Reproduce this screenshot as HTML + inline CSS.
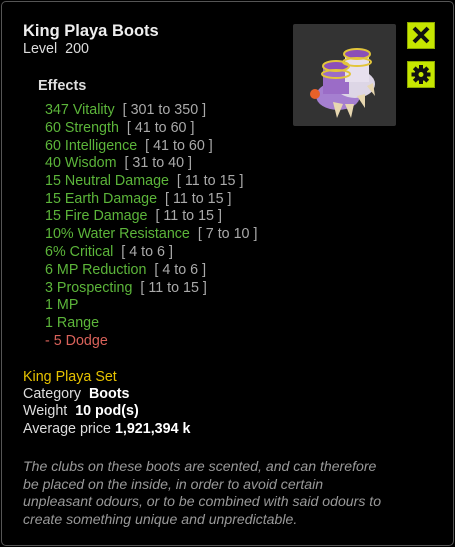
<!DOCTYPE html>
<html><head><style>
body{margin:0;width:455px;height:547px;background:#000;font-family:"Liberation Sans",sans-serif;overflow:hidden}
.box{position:absolute;left:1px;top:1px;width:451px;height:543px;border:1px solid #555;border-radius:5px;background:#000}
.t{position:absolute;white-space:nowrap;font-size:14.3px;line-height:16px}
.g{color:#5cb53a}.r{color:#aaa}
.btn{position:absolute;left:407px;width:28px;height:27px;background:#c6e600;border:1px solid #8da800;box-sizing:border-box}
</style></head><body>
<div class="box"></div>
<div class="t" style="left:23px;top:23px;font-size:16.5px;font-weight:bold;color:#eee">King Playa Boots</div>
<div class="t" style="left:23px;top:41px;color:#ddd">Level&nbsp; 200</div>
<div class="t" style="left:38px;top:78px;font-weight:bold;color:#ddd;font-size:14.5px">Effects</div>
<div class="t g" style="left:45px;top:102px">347 Vitality <span class="r">&nbsp;[ 301 to 350 ]</span></div>
<div class="t g" style="left:45px;top:120px">60 Strength <span class="r">&nbsp;[ 41 to 60 ]</span></div>
<div class="t g" style="left:45px;top:138px">60 Intelligence <span class="r">&nbsp;[ 41 to 60 ]</span></div>
<div class="t g" style="left:45px;top:155px">40 Wisdom <span class="r">&nbsp;[ 31 to 40 ]</span></div>
<div class="t g" style="left:45px;top:173px">15 Neutral Damage <span class="r">&nbsp;[ 11 to 15 ]</span></div>
<div class="t g" style="left:45px;top:191px">15 Earth Damage <span class="r">&nbsp;[ 11 to 15 ]</span></div>
<div class="t g" style="left:45px;top:208px">15 Fire Damage <span class="r">&nbsp;[ 11 to 15 ]</span></div>
<div class="t g" style="left:45px;top:226px">10% Water Resistance <span class="r">&nbsp;[ 7 to 10 ]</span></div>
<div class="t g" style="left:45px;top:244px">6% Critical <span class="r">&nbsp;[ 4 to 6 ]</span></div>
<div class="t g" style="left:45px;top:262px">6 MP Reduction <span class="r">&nbsp;[ 4 to 6 ]</span></div>
<div class="t g" style="left:45px;top:280px">3 Prospecting <span class="r">&nbsp;[ 11 to 15 ]</span></div>
<div class="t g" style="left:45px;top:297px">1 MP</div>
<div class="t g" style="left:45px;top:315px">1 Range</div>
<div class="t" style="left:45px;top:333px;color:#d9625a">- 5 Dodge</div>
<div class="t" style="left:23px;top:369px;color:#e6c200">King Playa Set</div>
<div class="t" style="left:23px;top:386px;color:#ddd">Category&nbsp; <b style="color:#fff">Boots</b></div>
<div class="t" style="left:23px;top:403px;color:#ddd">Weight&nbsp; <b style="color:#fff">10 pod(s)</b></div>
<div class="t" style="left:23px;top:421px;color:#ddd">Average price <b style="color:#fff">1,921,394 k</b></div>
<div class="t" style="left:23px;top:458px;color:#999;font-style:italic;line-height:17.7px;font-size:14.1px">The clubs on these boots are scented, and can therefore<br>be placed on the inside, in order to avoid certain<br>unpleasant odours, or to be combined with said odours to<br>create something unique and unpredictable.</div>
<div style="position:absolute;left:293px;top:24px;width:103px;height:102px;background:#333;border-radius:2px">
<svg width="103" height="102" viewBox="0 0 103 102">
<ellipse cx="45" cy="72" rx="22" ry="14" fill="#a57fd0"/>
<ellipse cx="62" cy="60" rx="20" ry="14" fill="#ddd6e6"/>
<rect x="30" y="40" width="26" height="30" fill="#9b6cc7"/>
<rect x="52" y="28" width="24" height="30" fill="#e7e0ee"/>
<ellipse cx="64" cy="30" rx="13" ry="5" fill="#8b4fb8" stroke="#e2c53b" stroke-width="2"/>
<ellipse cx="43" cy="42" rx="13" ry="5" fill="#8b4fb8" stroke="#e2c53b" stroke-width="2"/>
<ellipse cx="43" cy="50" rx="14" ry="4" fill="none" stroke="#e2c53b" stroke-width="2"/>
<ellipse cx="64" cy="38" rx="14" ry="4" fill="none" stroke="#e2c53b" stroke-width="2"/>
<circle cx="22" cy="70" r="5" fill="#e8612a"/>
<path d="M40 78l4 16 6-14zM52 80l6 14 3-14zM64 72l8 12 0-14zM74 62l8 10-2-13z" fill="#e7d7b0"/>
</svg></div>
<div class="btn" style="top:22px"><svg width="26" height="25" viewBox="0 0 26 25"><path d="M6 5L20 19M20 5L6 19" stroke="#111" stroke-width="4"/></svg></div>
<div class="btn" style="top:61px"><svg width="26" height="25" viewBox="0 0 26 25"><g fill="#111" transform="translate(13 12.5)"><circle r="6.5"/><rect x="-2" y="-9.5" width="4" height="19"/><rect x="-2" y="-9.5" width="4" height="19" transform="rotate(45)"/><rect x="-2" y="-9.5" width="4" height="19" transform="rotate(90)"/><rect x="-2" y="-9.5" width="4" height="19" transform="rotate(135)"/><circle r="2.5" fill="#c6e600"/></g></svg></div>
</body></html>
